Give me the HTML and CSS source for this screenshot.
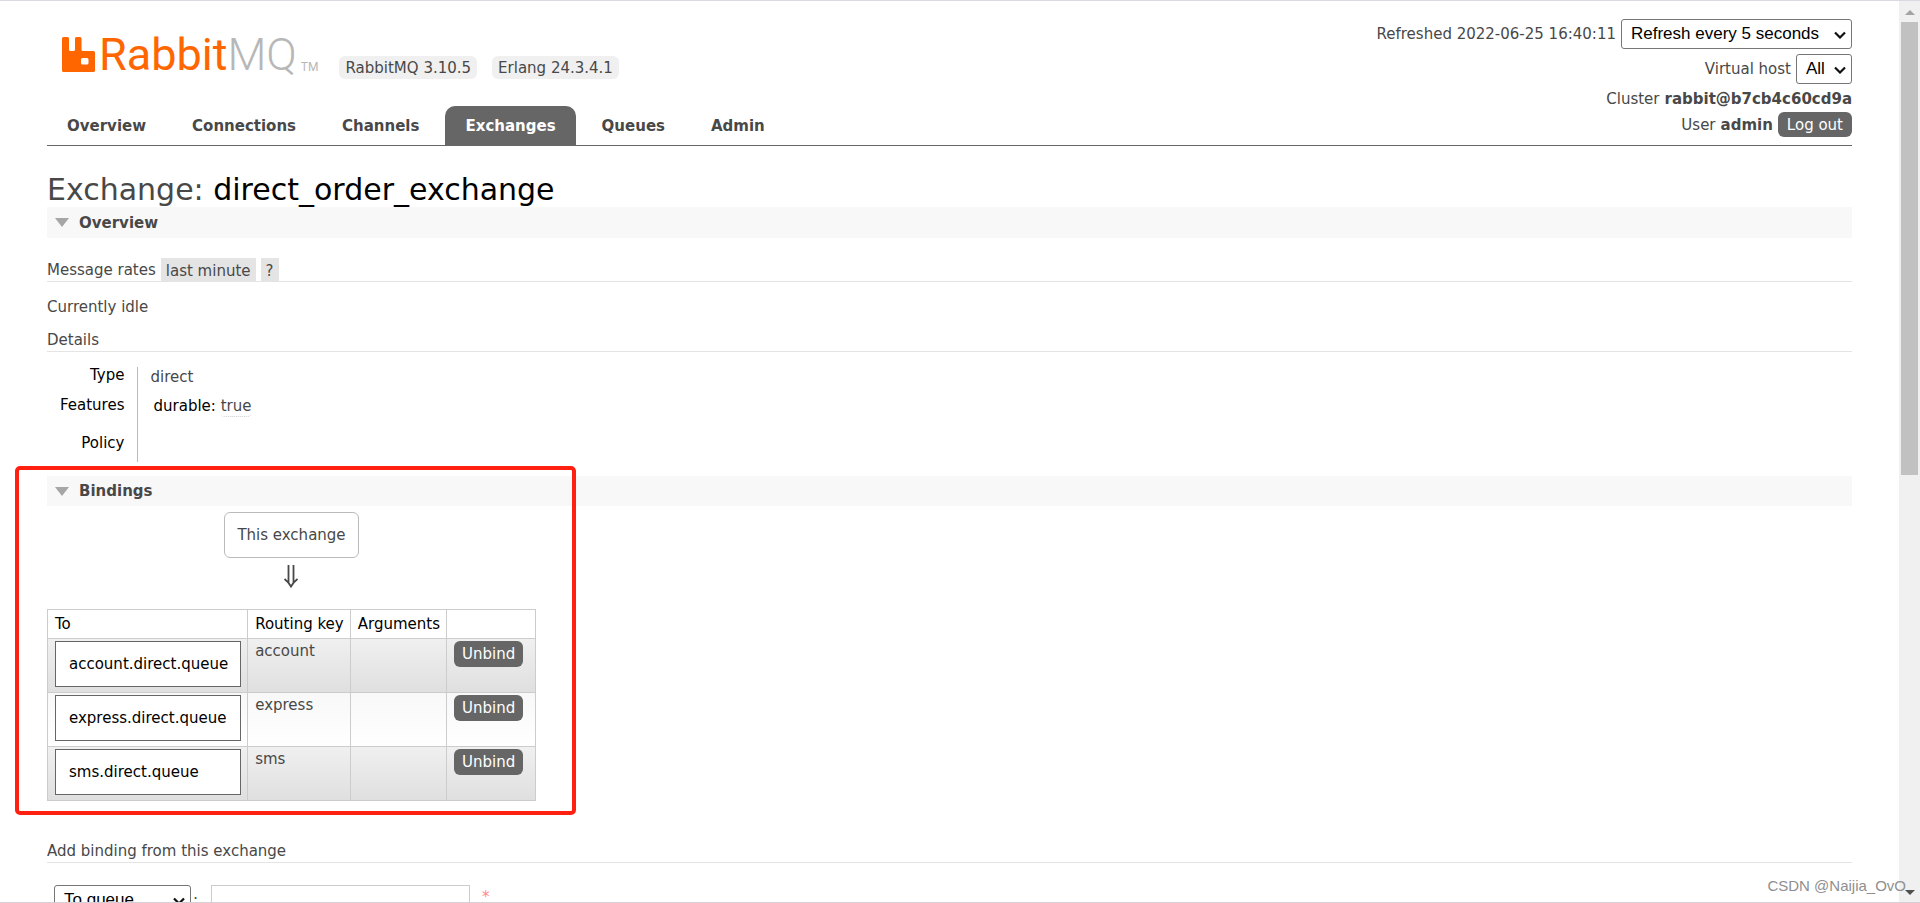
FILE: index.html
```html
<!DOCTYPE html>
<html lang="en">
<head>
<meta charset="utf-8">
<title>RabbitMQ Management</title>
<link rel="stylesheet" href="styles.css">
</head>
<body>
<div class="window">
  <div class="page">
    <header class="header">
      <div class="brand">
        <a class="logo" href="#" aria-label="RabbitMQ">
          <svg class="logo-mark" viewBox="0 0 33 35" aria-hidden="true"><path fill="#f60" fill-rule="evenodd" d="M1.500 0H5.500Q7 0 7 1.500V12.500Q7 14 8.500 14H11.500Q13 14 13 12.500V1.500Q13 0 14.500 0H18Q19.500 0 19.500 1.500V12.500Q19.500 14 21 14H31.500Q33 14 33 15.500V33.500Q33 35 31.500 35H1.500Q0 35 0 33.500V1.500Q0 0 1.500 0ZM20.500 21Q19 21 19 22.500V26Q19 27.500 20.500 27.500H25Q26.500 27.500 26.500 26V22.500Q26.500 21 25 21Z"/></svg>
          <span class="logo-rabbit">Rabbit</span><span class="logo-mq">MQ</span><span class="logo-tm">TM</span>
        </a>
        <span class="version">RabbitMQ 3.10.5</span>
        <span class="version">Erlang 24.3.4.1</span>
      </div>
      <div class="status">
        <div class="status-row"><label for="refresh">Refreshed 2022-06-25 16:40:11</label>
          <select id="refresh" class="select refresh"><option>Refresh every 5 seconds</option></select></div>
        <div class="status-row"><label for="vhost">Virtual host</label>
          <select id="vhost" class="select vhost"><option>All</option></select></div>
        <div class="status-row cluster">Cluster <b>rabbit@b7cb4c60cd9a</b></div>
        <div class="status-row">User <b>admin</b> <button class="button logout" type="button">Log out</button></div>
      </div>
      <nav class="tabs">
        <a class="tab" href="#">Overview</a>
        <a class="tab" href="#">Connections</a>
        <a class="tab" href="#">Channels</a>
        <a class="tab selected" href="#">Exchanges</a>
        <a class="tab" href="#">Queues</a>
        <a class="tab" href="#">Admin</a>
      </nav>
    </header>
    <main>
      <h1 class="title">Exchange: <b>direct_order_exchange</b></h1>
      <h2 class="section"><span class="triangle"></span>Overview</h2>
      <h3 class="subhead rates"><span class="rates-label">Message rates</span> <button class="chip" type="button">last minute</button> <button class="chip help" type="button">?</button></h3>
      <p class="idle">Currently idle</p>
      <h3 class="subhead details">Details</h3>
      <table class="facts">
        <tr><th>Type</th><td>direct</td></tr>
        <tr class="features"><th>Features</th><td><span class="key">durable:</span> <span class="value">true</span></td></tr>
        <tr class="policy"><th>Policy</th><td></td></tr>
      </table>
      <h2 class="section bindings-head"><span class="triangle"></span>Bindings</h2>
      <div class="bindings">
        <span class="exchange">This exchange</span>
        <svg class="arrow" viewBox="0 0 16 23" aria-hidden="true"><path d="M5.500 0V18M10.500 0V18M1.500 14Q5.500 17 8 21.500Q10.500 17 14.500 14" fill="none" stroke="#484848" stroke-width="1.800"/></svg>
        <table class="list">
          <thead><tr><th>To</th><th>Routing key</th><th>Arguments</th><th></th></tr></thead>
          <tbody>
            <tr><td><a class="queue" href="#">account.direct.queue</a></td><td>account</td><td></td><td><button class="button unbind" type="button">Unbind</button></td></tr>
            <tr><td><a class="queue" href="#">express.direct.queue</a></td><td>express</td><td></td><td><button class="button unbind" type="button">Unbind</button></td></tr>
            <tr><td><a class="queue" href="#">sms.direct.queue</a></td><td>sms</td><td></td><td><button class="button unbind" type="button">Unbind</button></td></tr>
          </tbody>
        </table>
        <div class="highlight"></div>
      </div>
      <h3 class="subhead add">Add binding from this exchange</h3>
      <form class="form">
        <select class="select destination" aria-label="Destination type"><option>To queue</option></select><span class="colon">:</span>
        <input class="input" type="text" aria-label="Destination"><span class="required">*</span>
      </form>
    </main>
  </div>
  <div class="scrollbar" aria-hidden="true">
    <span class="scroll-up"></span>
    <span class="thumb"></span>
    <span class="scroll-down"></span>
  </div>
  <div class="watermark">CSDN @Naijia_OvO</div>
</div>
</body>
</html>
```
FILE: styles.css
```css
* { box-sizing: border-box; }
body {
  margin: 0;
  background: #fff;
  color: #484848;
  font: 15px/20px Verdana, "DejaVu Sans", sans-serif;
}
button { font: inherit; border: 0; cursor: pointer; }

.window {
  position: relative;
  display: grid;
  grid-template-columns: 1fr 21px;
  height: 100vh;
  overflow: hidden;
  border-top: 1px solid #d9d9df;
  border-bottom: 1px solid #d5d0d3;
}
.page { min-width: 0; padding: 0 47px; overflow: hidden; }

/* Header */
.header {
  display: grid;
  grid-template-columns: 1fr auto;
  grid-template-rows: auto auto;
  border-bottom: 1px solid #666;
}
.brand { display: flex; align-items: flex-end; gap: 15px; height: 78px; padding-left: 15px; }
.logo { display: flex; align-items: flex-end; height: 42px; padding-bottom: 7px; margin-right: 6px; color: #b7b7b7; font-family: Roboto, sans-serif; text-decoration: none; }
.logo-mark { width: 33px; height: 35px; margin-right: 4px; }
.logo-rabbit, .logo-mq { font-size: 45px; line-height: 34px; }
.logo-rabbit { color: #f60; }
.logo-mq { font-weight: 300; }
.logo-tm { font-size: 12px; line-height: 9px; margin-left: 4px; }
.version { padding: 2px 6px 1px; border-radius: 6px; background: #f0f0f0; }

.status { grid-column: 2; grid-row: 1 / 3; padding-top: 18px; text-align: right; }
.status-row { display: flex; align-items: center; justify-content: flex-end; gap: 5px; margin-bottom: 5px; }
.status-row.cluster { margin: 0 0 3px; }
.select {
  height: 30px;
  padding: 0 20px 2px 9px;
  border: 1px solid #767676;
  border-radius: 3px;
  appearance: none;
  color: #000;
  font: 17px "Liberation Sans", Arial, sans-serif;
  background: #fff url("data:image/svg+xml,%3Csvg xmlns='http://www.w3.org/2000/svg' width='12' height='8'%3E%3Cpath d='M1 1.500l5 5 5-5' fill='none' stroke='%23111' stroke-width='2.200'/%3E%3C/svg%3E") no-repeat right 5px top 11px;
}
.refresh { width: 231px; }
.vhost { width: 56px; }
.button { border-radius: 6px; background: #666; color: #fff; }
.logout { height: 25px; padding: 0 9px; }

.tabs { grid-row: 2; display: flex; gap: 6px; margin-top: 27px; }
.tab {
  padding: 10px 20px 9px;
  border-radius: 10px 10px 0 0;
  color: #484848;
  font-weight: bold;
  text-decoration: none;
}
.tab.selected { background: #666; color: #fff; }

/* Headings */
.title { margin: 26px 0 0; font-size: 30px; line-height: 35px; font-weight: normal; }
.title b { color: #000; font-weight: normal; }
.section { display: flex; align-items: center; gap: 10px; height: 31px; margin: 0; padding: 0 8px; background: #f8f8f8; font-size: 15px; }
.section.bindings-head { height: 30px; }
.triangle { border: 7px solid transparent; border-top: 9px solid #a6a6a6; border-bottom: 0; }
.subhead { margin: 0; border-bottom: 1px solid #e4e4e4; font-size: 15px; font-weight: normal; }
.rates { display: flex; gap: 5px; margin-top: 20px; line-height: 23px; }
.rates-label { line-height: 25px; height: 23px; }
.chip { height: 23px; padding: 2px 5px 0; background: #e4e4e4; color: #484848; line-height: 20px; }
.idle { margin: 15px 0 12px; }
.details { line-height: 22px; }

/* Details table */
.facts { margin: 15px 0 14px; border-collapse: collapse; }
.facts th { width: 90px; padding: 0 12px 0 0; border-right: 1px solid #bbb; color: #000; font-weight: normal; text-align: right; vertical-align: top; line-height: 16px; }
.facts td { padding: 0 13px; height: 29px; vertical-align: top; }
.facts .features td { padding-left: 16px; }
.facts .features th { padding-top: 1px; }
.facts .policy th { height: 37px; padding-top: 10px; }
.key { color: #000; line-height: 16px; }
.value { display: inline-block; border-bottom: 1px dotted #ccc; border-radius: 4px; line-height: 19px; }

/* Bindings */
.bindings { position: relative; display: flex; flex-direction: column; align-items: center; width: max-content; padding-top: 6px; }
.exchange { padding: 12px; border: 1px solid #bbb; border-radius: 6px; line-height: 20px; }
.arrow { width: 16px; height: 23px; margin: 7px 0 21px; }
.list { border-collapse: collapse; }
.list th, .list td { border: 1px solid #ccc; text-align: left; vertical-align: top; font-weight: normal; }
.list th { padding: 4px 6px 4px 7px; color: #000; }
.list td { height: 54px; padding: 2px 6px 2px 7px; }
.list th:last-child { width: 89px; }
.list tbody tr { background: linear-gradient(#f8f8f8, #fff); }
.list tbody tr:nth-child(odd) { background: linear-gradient(#f0f0f0, #dfdfdf); }
.queue { display: block; padding: 12px 12px 11px 13px; border: 1px solid #666; background: #fff; color: #000; text-decoration: none; line-height: 21px; }
.unbind { height: 26px; padding: 0 8px; }
.highlight { position: absolute; inset: -40px -40px -14px -32px; border: 4px solid #ff2012; border-radius: 5px; pointer-events: none; }

/* Add binding form */
.add { margin-top: 39px; line-height: 22px; }
.form { display: flex; align-items: flex-start; margin-top: 22px; padding-left: 7px; }
.destination { width: 137px; }
.colon { width: 20px; padding: 5px 0 0 2px; }
.input { width: 259px; height: 30px; border: 1px solid #ccc; }
.required { margin-left: 12px; padding-top: 2px; color: #f88; }

/* Scrollbar */
.scrollbar { display: flex; flex-direction: column; align-items: center; background: #f0f0f0; }
.scroll-up { margin-top: 9px; border: 5px solid transparent; border-bottom-color: #a3a3a3; border-top: 0; }
.thumb { width: 17px; height: 453px; margin-top: 7px; background: #c1c1c1; }
.scroll-down { margin: auto 0 7px; border: 5px solid transparent; border-top-color: #505050; border-bottom: 0; }

.watermark { position: absolute; right: 14px; bottom: 5px; color: #8f8f8f; font: 15px/22px "Liberation Sans", Arial, sans-serif; }
```
